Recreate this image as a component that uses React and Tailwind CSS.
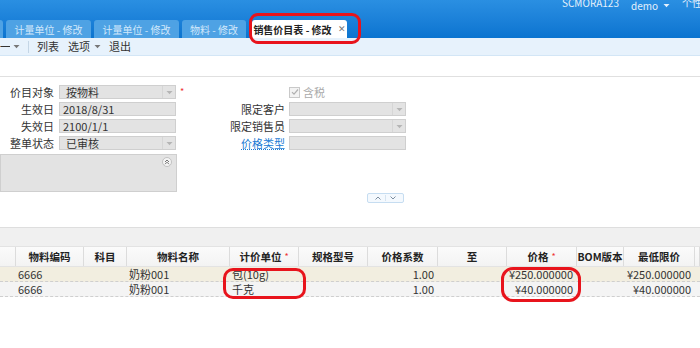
import React from "react";

const font = { fontFamily: '"Noto Sans CJK SC", "Noto Sans", sans-serif' };

const Caret = () => (
  <svg width="7" height="5" viewBox="0 0 7 5" className="fill-current">
    <path d="M0.5 1h6L3.5 4.2z" />
  </svg>
);

const Select = ({ value, w = "w-[117px]" }) => (
  <div className={`${w} h-[14px] flex items-center bg-[#e3e3e3] border border-[#cfcfcf]`}>
    <span className="flex-1 pl-[6px] leading-none">{value}</span>
    <span className="w-[13px] h-full flex items-center justify-center border-l border-[#d6d6d6] text-[#b5b5b5]">
      <Caret />
    </span>
  </div>
);

const Input = ({ value, w = "w-[117px]" }) => (
  <div className={`${w} h-[14px] flex items-center bg-[#e3e3e3] border border-[#cfcfcf] pl-[3px] leading-none`}>
    {value}
  </div>
);

const cols = [
  { w: 16, t: "" },
  { w: 68, t: "物料编码" },
  { w: 43, t: "科目" },
  { w: 103, t: "物料名称" },
  { w: 69, t: "计价单位", req: true },
  { w: 69, t: "规格型号" },
  { w: 70, t: "价格系数" },
  { w: 69, t: "至" },
  { w: 70, t: "价格", req: true },
  { w: 47, t: "BOM版本" },
  { w: 71, t: "最低限价" },
  { w: 5, t: "" },
];

const rows = [
  { bg: "bg-[#f2eee0]", unit: "包(10g)", price: "¥250.000000" },
  { bg: "bg-[#f4f4f4]", unit: "千克", price: "¥40.000000" },
];

const Tab = ({ children, w }) => (
  <div className={`${w} h-[18px] rounded-t-[3px] bg-[#4ea2e4] text-[#d2e8fb] flex items-center justify-center text-[10px] shrink-0`}>
    {children}
  </div>
);

export default function App() {
  return (
    <div className="relative w-[700px] h-[348px] overflow-hidden bg-white text-[11px] text-[#333] whitespace-nowrap" style={font}>
      {/* header */}
      <div className="h-[38px] bg-gradient-to-b from-[#2a8fe2] to-[#0a74d0] flex flex-col">
        <div className="h-[20px] flex justify-end gap-[12px] -mt-[5px] text-[#e4f1fc] text-[10px]">
          <span>SCMORA123</span>
          <span className="flex items-center gap-[5px]">demo <Caret /></span>
          <span className="w-[18px] overflow-hidden">个性化</span>
        </div>
        <div className="flex items-end gap-[3px] -ml-[80px] mt-auto">
          <Tab w="w-[83px]">计量单位 - 修改</Tab>
          <Tab w="w-[85px]">计量单位 - 修改</Tab>
          <Tab w="w-[85px]">计量单位 - 修改</Tab>
          <Tab w="w-[64px]">物料 - 修改</Tab>
          <div className="ml-[3px] w-[95px] h-[18px] rounded-t-[3px] bg-white flex items-center justify-center gap-[6px] font-bold text-[10px] text-[#222] shrink-0">
            <span>销售价目表 - 修改</span>
            <span className="text-[#777] font-normal text-[9px]">✕</span>
          </div>
        </div>
      </div>

      {/* toolbar */}
      <div className="h-[18px] bg-[#e7f2fc] border-b border-[#d3e6f6] flex items-center">
        <span className="w-[10px] overflow-hidden">一</span>
        <span className="ml-[3px] text-[#777]"><Caret /></span>
        <span className="ml-[8px] w-px h-[12px] bg-[#c4d6e6]" />
        <span className="ml-[8px]">列表</span>
        <span className="ml-[9px]">选项</span>
        <span className="ml-[4px] text-[#777]"><Caret /></span>
        <span className="ml-[8px]">退出</span>
      </div>

      <div className="h-[21px] border-b border-[#e0e0e0]" />

      {/* form */}
      <div className="flex pt-[8px]">
        <div className="w-[200px] flex flex-col">
          <div className="flex flex-col gap-[3px]">
            {[
              ["价目对象", <Select value="按物料" />, true],
              ["生效日", <Input value="2018/8/31" />],
              ["失效日", <Input value="2100/1/1" />],
              ["整单状态", <Select value="已审核" />],
            ].map(([l, c, req]) => (
              <div key={l} className="h-[14px] flex items-center">
                <span className="w-[55px] text-right pr-[1px]">{l}</span>
                <span className="ml-[4px]">{c}</span>
                {req && <span className="ml-[4px] text-[#e33] text-[9px]">*</span>}
              </div>
            ))}
          </div>
          <div className="mt-[4px] w-[177px] h-[38px] bg-[#e3e3e3] border border-[#cfcfcf] flex justify-end p-[2px] pr-[4px]">
            <svg width="10" height="10" viewBox="0 0 10 10">
              <circle cx="5" cy="5" r="4.5" fill="#f4f4f4" stroke="#b8b8b8" strokeWidth="0.8" />
              <path d="M3 5L5 3l2 2M3 7.2l2-2 2 2" fill="none" stroke="#666" strokeWidth="0.9" />
            </svg>
          </div>
        </div>

        <div className="flex flex-col gap-[3px]">
          <div className="h-[14px] flex items-center pl-[89px] text-[#aaa]">
            <span className="w-[11px] h-[11px] border border-[#c9c9c9] bg-[#f3f3f3] flex items-center justify-center">
              <svg width="8" height="8" viewBox="0 0 8 8">
                <path d="M1 4.2l2 2L7 1.5" fill="none" stroke="#b0b0b0" strokeWidth="1.2" />
              </svg>
            </span>
            <span className="ml-[3px]">含税</span>
          </div>
          {[
            ["限定客户", <Select value="" w="w-[117px]" />],
            ["限定销售员", <Select value="" w="w-[117px]" />],
            ["价格类型", <Input value="" w="w-[117px]" />, true],
          ].map(([l, c, link]) => (
            <div key={l} className="h-[14px] flex items-center">
              <span className={`w-[85px] text-right ${link ? "text-[#1b7bd4] underline decoration-dotted" : ""}`}>{l}</span>
              <span className="ml-[4px]">{c}</span>
            </div>
          ))}
        </div>
      </div>

      {/* collapse toggle */}
      <div className="flex pl-[367px] mt-[1px]">
        <div className="w-[37px] h-[10px] rounded-[2px] border border-[#c6ddf1] bg-[#f4f9fe] flex items-center justify-center gap-[4px] text-[#7d8ea0]">
          <svg width="6" height="4" viewBox="0 0 6 4"><path d="M0.5 3.5L3 1l2.5 2.5" fill="none" stroke="currentColor" strokeWidth="1" /></svg>
          <span className="w-px h-[6px] bg-[#d6e4f0]" />
          <svg width="6" height="4" viewBox="0 0 6 4"><path d="M0.5 0.5L3 3l2.5-2.5" fill="none" stroke="currentColor" strokeWidth="1" /></svg>
        </div>
      </div>

      {/* table */}
      <div className="mt-[24px] h-[19px] border-t border-[#dedede] bg-[#f0f0f0]" />
      <div className="h-[21px] flex bg-gradient-to-b from-[#fbfbfb] to-[#f3f3f3] border-t border-[#e3e3e3] border-b border-[#e2e2e2]">
        {cols.map((c, i) => (
          <div key={i} className="h-full flex items-center justify-center font-bold text-[10.5px] text-[#222] border-r border-[#dcdcdc] shrink-0" style={{ width: c.w }}>
            {c.t}
            {c.req && <span className="ml-[3px] text-[#e33] font-normal text-[9px]">*</span>}
          </div>
        ))}
      </div>
      {rows.map((r, i) => (
        <div key={i} className={`h-[15px] flex items-center ${r.bg} border-b border-dashed border-[#cfcfcf]`}>
          <span className="w-[84px] pl-[18px]">6666</span>
          <span className="w-[43px]" />
          <span className="w-[103px] pl-[2px]">奶粉001</span>
          <span className="w-[69px] pl-[2px]">{r.unit}</span>
          <span className="w-[69px]" />
          <span className="w-[70px] text-right pr-[4px]">1.00</span>
          <span className="w-[69px]" />
          <span className="w-[70px] text-right pr-[4px]">{r.price}</span>
          <span className="w-[47px]" />
          <span className="w-[71px] text-right pr-[4px]">{r.price}</span>
        </div>
      ))}

      {/* red annotations */}
      <div className="absolute left-[249px] top-[13px] w-[112px] h-[31px] rounded-[9px] border-[3px] border-[#e8141c]" />
      <div className="absolute left-[223px] top-[268px] w-[83px] h-[31px] rounded-[10px] border-[3px] border-[#e8141c]" />
      <div className="absolute left-[501px] top-[267px] w-[80px] h-[35px] rounded-[12px] border-[3px] border-[#e8141c]" />
    </div>
  );
}
